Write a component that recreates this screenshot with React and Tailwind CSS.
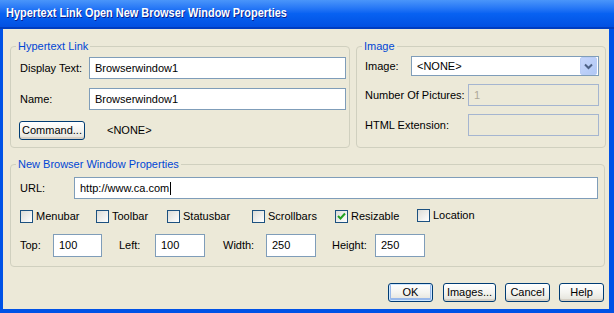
import React from 'react';

const font = "font-['Liberation_Sans',Arial,sans-serif]";

const Field = ({ value, className = '', disabled = false, caret = false }) => (
  <div
    className={`flex items-center border border-[#7F9DB9] pl-[5px] ${
      disabled ? 'bg-[#ECE9D8] text-[#ACA899] border-[#A5B5D0]' : 'bg-white text-black'
    } ${className}`}
  >
    <span className="leading-none">{value}</span>
    {caret && <span className="ml-px w-px h-[13px] bg-black" />}
  </div>
);

const Button = ({ children, className = '', primary = false }) => (
  <button
    className={`flex items-center justify-center h-[19px] rounded-[3px] border border-[#003C74] bg-gradient-to-b from-white via-[#F4F4F0] to-[#E3E2DA] text-[11px] text-black ${
      primary ? 'shadow-[inset_0_0_0_1px_#CEE7FF,inset_0_-1px_0_2px_#98B8EA]' : 'shadow-[inset_0_-2px_0_0_#D6D0C5]'
    } ${font} ${className}`}
  >
    {children}
  </button>
);

const Check = ({ label, checked = false, className = '' }) => (
  <div className={`flex items-center gap-[3px] ${className}`}>
    <div className="w-[13px] h-[13px] border border-[#1C5180] bg-gradient-to-br from-[#DCDCD7] to-white flex items-center justify-center">
      {checked && (
        <svg width="9" height="9" viewBox="0 0 9 9">
          <path d="M1 4 L3.5 6.5 L8 1.5" fill="none" stroke="#21A121" strokeWidth="2" />
        </svg>
      )}
    </div>
    <span className="leading-none">{label}</span>
  </div>
);

const Group = ({ title, className = '', children }) => (
  <fieldset className={`border border-[#D0D0BF] rounded-[4px] ${className}`}>
    <legend className="ml-[5px] px-[2px] leading-[13px] text-[#0046D5]">{title}</legend>
    {children}
  </fieldset>
);

export default function App() {
  return (
    <div className={`w-[614px] h-[313px] flex flex-col bg-[#0052E6] text-[11px] text-black ${font}`}>
      {/* Title bar */}
      <div className="h-[29px] flex items-center pl-[6px] pb-[2px] bg-gradient-to-b from-[#4A95FA] via-[#0862F2] to-[#0250E2] border-b-2 border-[#003DC0]">
        <span className="inline-block origin-left scale-x-[0.84] whitespace-nowrap font-bold text-[13px] text-white [text-shadow:1px_1px_0_#0A1E8C]">
          Hypertext Link Open New Browser Window Properties
        </span>
      </div>

      <div className="flex-1 ml-[3px] mr-[5px] mb-[4px] bg-[#ECE9D8] flex flex-col pl-[7px] pt-[11px]">
        <div className="flex gap-[6px]">
          <Group title="Hypertext Link" className="w-[340px] h-[108px]">
            <div className="flex flex-col pl-[9px]">
              <div className="flex items-center mt-[4px]">
                <span className="w-[69px]">Display Text:</span>
                <Field value="Browserwindow1" className="w-[257px] h-[22px]" />
              </div>
              <div className="flex items-center mt-[9px]">
                <span className="w-[69px]">Name:</span>
                <Field value="Browserwindow1" className="w-[257px] h-[22px]" />
              </div>
              <div className="flex items-center mt-[11px]">
                <Button className="w-[66px] -ml-px">Command...</Button>
                <span className="ml-[22px]">&lt;NONE&gt;</span>
              </div>
            </div>
          </Group>

          <Group title="Image" className="w-[250px] h-[108px]">
            <div className="flex flex-col pl-[8px]">
              <div className="flex items-center mt-[3px]">
                <span className="w-[46px]">Image:</span>
                <div className="w-[188px] h-[20px] border border-[#7F9DB9] bg-white flex items-center">
                  <span className="flex-1 pl-[5px] leading-none">&lt;NONE&gt;</span>
                  <div className="w-[17px] h-[18px] mr-px rounded-[2px] bg-gradient-to-br from-[#C6D6FB] to-[#B1C8F5] border border-[#B9CCF5] flex items-center justify-center">
                    <svg width="9" height="7" viewBox="0 0 9 7">
                      <path d="M1 1.5 L4.5 5 L8 1.5" fill="none" stroke="#4D6185" strokeWidth="2" />
                    </svg>
                  </div>
                </div>
              </div>
              <div className="flex items-center mt-[8px]">
                <span className="w-[103px]">Number Of Pictures:</span>
                <Field value="1" disabled className="w-[131px] h-[22px]" />
              </div>
              <div className="flex items-center mt-[8px]">
                <span className="w-[103px]">HTML Extension:</span>
                <Field value="" disabled className="w-[131px] h-[22px]" />
              </div>
            </div>
          </Group>
        </div>

        <Group title="New Browser Window Properties" className="mt-[10px] w-[595px] h-[109px]">
          <div className="flex flex-col pl-[9px]">
            <div className="flex items-center mt-[6px]">
              <span className="w-[54px]">URL:</span>
              <Field value="http://www.ca.com" caret className="w-[524px] h-[22px]" />
            </div>
            <div className="flex items-center mt-[11px] h-[13px]">
              <Check label="Menubar" className="w-[76px]" />
              <Check label="Toolbar" className="w-[71px]" />
              <Check label="Statusbar" className="w-[85px]" />
              <Check label="Scrollbars" className="w-[83px]" />
              <Check label="Resizable" checked className="w-[82px]" />
              <Check label="Location" className="-mt-[3px]" />
            </div>
            <div className="flex items-center mt-[11px]">
              <span className="w-[33px]">Top:</span>
              <Field value="100" className="w-[49px] h-[23px]" />
              <span className="ml-[17px] w-[36px]">Left:</span>
              <Field value="100" className="w-[50px] h-[23px]" />
              <span className="ml-[18px] w-[43px]">Width:</span>
              <Field value="250" className="w-[50px] h-[23px]" />
              <span className="ml-[16px] w-[43px]">Height:</span>
              <Field value="250" className="w-[50px] h-[23px]" />
            </div>
          </div>
        </Group>

        <div className="flex justify-end mt-[16px] pr-[5px]">
          <Button primary className="w-[45px]">OK</Button>
          <Button className="w-[53px] ml-[10px]">Images...</Button>
          <Button className="w-[45px] ml-[9px]">Cancel</Button>
          <Button className="w-[45px] ml-[9px]">Help</Button>
        </div>
      </div>
    </div>
  );
}
